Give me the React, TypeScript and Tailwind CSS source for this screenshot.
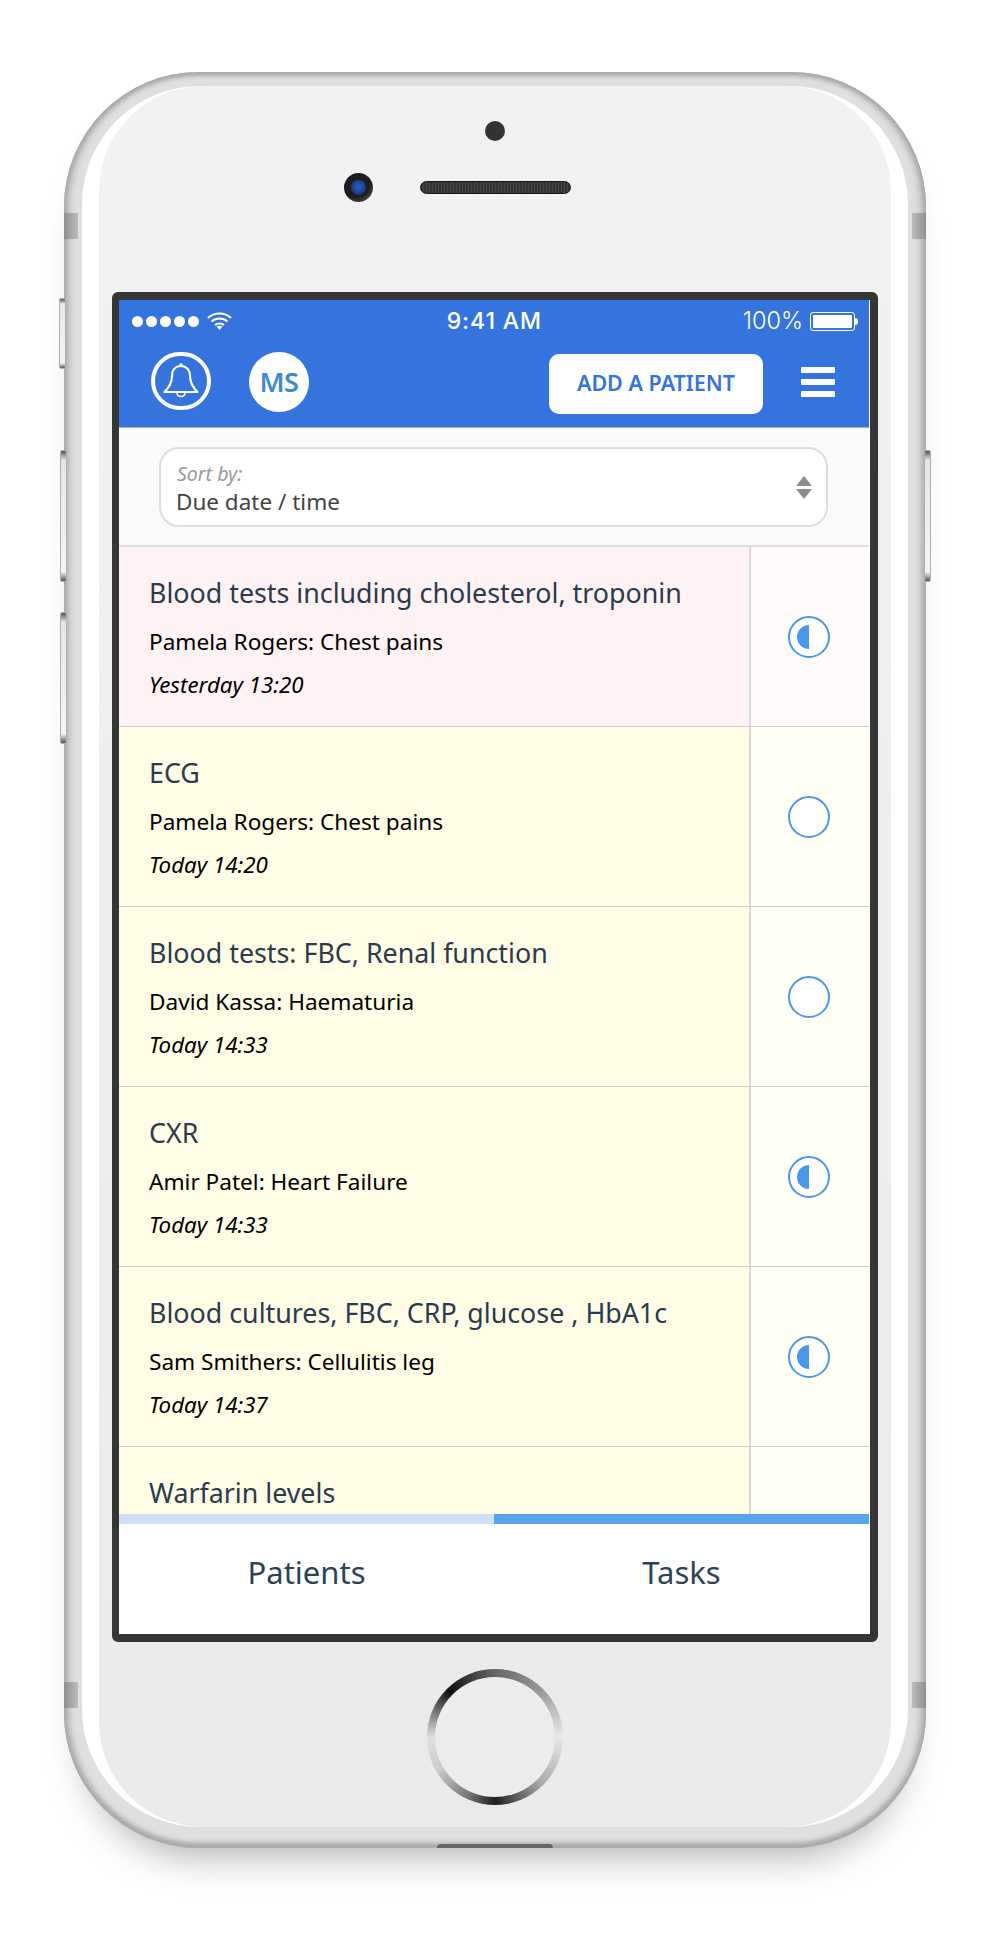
const tasks = [
  { title: "Blood tests including cholesterol, troponin", who: "Pamela Rogers: Chest pains", due: "Yesterday 13:20", state: "half", overdue: true },
  { title: "ECG", who: "Pamela Rogers: Chest pains", due: "Today 14:20", state: "empty" },
  { title: "Blood tests: FBC, Renal function", who: "David Kassa: Haematuria", due: "Today 14:33", state: "empty" },
  { title: "CXR", who: "Amir Patel: Heart Failure", due: "Today 14:33", state: "half" },
  { title: "Blood cultures, FBC, CRP, glucose , HbA1c", who: "Sam Smithers: Cellulitis leg", due: "Today 14:37", state: "half" },
  { title: "Warfarin levels", who: "", due: "", state: "none" },
];

function Bell() {
  return (
    <div className="w-[60px] h-[58px] rounded-full border-[4px] border-white flex items-center justify-center">
      <svg width="36" height="38" viewBox="0 0 36 38" fill="none" stroke="#fff" strokeWidth="2.200" strokeLinejoin="round">
        <circle cx="18" cy="3" r="1.800" fill="#fff" stroke="none" />
        <path d="M18 4c-6 0-9 4.500-9 10 0 7-2.500 11-7.500 16h33c-5-5-7.500-9-7.500-16 0-5.500-3-10-9-10z" />
        <path d="M14 30.500c0 2.500 1.800 4 4 4s4-1.500 4-4" strokeWidth="1.500" />
      </svg>
    </div>
  );
}

function Wifi() {
  return (
    <svg width="25" height="18" viewBox="0 0 25 18" fill="none" stroke="#fff" strokeWidth="2.200">
      <path d="M1 6c6.500-6 16.500-6 23 0" />
      <path d="M4.500 9.500c4.500-4 11.500-4 16 0" />
      <path d="M8 13c2.500-2 6.500-2 9 0" />
      <path d="M12.500 18l-3-3.400c1.800-1 4.200-1 6 0z" fill="#fff" stroke="none" />
    </svg>
  );
}

function StatusBar() {
  return (
    <div className="relative h-[42px] flex items-center pl-[13px] pr-[11px] text-white font-['Inter',sans-serif]">
      <div className="flex gap-[3px]">
        {[0, 1, 2, 3, 4].map((n) => (
          <span key={n} className="w-[11px] h-[11px] rounded-full bg-white" />
        ))}
      </div>
      <div className="ml-[8px]">
        <Wifi />
      </div>
      <div className="flex-1 text-center text-[23px] font-medium pl-[14px] tracking-[0.9px]">9:41 AM</div>
      <span className="text-[23.500px] font-light">100%</span>
      <div className="ml-[7px] flex items-center">
        <div className="w-[45px] h-[19px] rounded-[3px] border border-white p-[2px]">
          <div className="w-full h-full bg-white rounded-[1px]" />
        </div>
        <div className="w-[3px] h-[7px] bg-white rounded-r-full" />
      </div>
    </div>
  );
}

function Header() {
  return (
    <div className="bg-[#3574dc] border-b border-[#a9b4c2]">
      <StatusBar />
      <div className="h-[85px] flex items-start pt-[10px] pl-[32px]">
        <Bell />
        <div className="ml-[38px] w-[60px] h-[60px] rounded-full bg-white flex items-center justify-center text-[#3d8ad2] text-[27px] font-semibold tracking-[-0.5px]">
          MS
        </div>
        <button className="ml-auto mt-[2px] w-[214px] h-[60px] pb-[2px] rounded-[10px] bg-white text-[#3574dc] text-[21.500px] font-semibold">
          ADD A PATIENT
        </button>
        <div className="ml-[38px] mr-[34px] mt-[15px] w-[34px] flex flex-col gap-[6px]">
          <span className="h-[6px] rounded-[1px] bg-white" />
          <span className="h-[6px] rounded-[1px] bg-white" />
          <span className="h-[6px] rounded-[1px] bg-white" />
        </div>
      </div>
    </div>
  );
}

function SortBar() {
  return (
    <div className="h-[119px] bg-[#f9fafc] border-b-2 border-[#dddddd] pt-[19px] pl-[40px] pr-[41px]">
      <div className="h-[80px] rounded-[20px] border-2 border-[#dddddd] bg-white flex items-center pl-[15px] pr-[14px]">
        <div className="flex-1 pt-[5px]">
          <div className="text-[19.500px] leading-[25px] italic text-[#999999] pl-[1px]">Sort by:</div>
          <div className="text-[22.500px] leading-[32px] text-[#444444]">Due date / time</div>
        </div>
        <svg width="16" height="23" viewBox="0 0 16 23" fill="#8c8c8c">
          <path d="M8 0l8 10H0z" />
          <path d="M0 13h16l-8 10z" />
        </svg>
      </div>
    </div>
  );
}

function Progress({ state }: { state: string }) {
  if (state === "none") return null;
  return (
    <svg width="42" height="42" viewBox="0 0 42 42">
      <circle cx="21" cy="21" r="20" fill="#fff" stroke="#4a98e8" strokeWidth="2" />
      {state === "half" && <path d="M21 9a12 12 0 0 0 0 24z" fill="#4a98e8" />}
    </svg>
  );
}

function TaskRow({ task }: { task: (typeof tasks)[number] }) {
  return (
    <div className={`h-[180px] shrink-0 flex border-b border-[#cccccc] ${task.overdue ? "bg-[#fff2f4]" : "bg-[#fffde6]"}`}>
      <div className="flex-1 pl-[30px] pt-[28px]">
        <div className="text-[26.800px] leading-[36px] text-[#2a3b4d]">{task.title}</div>
        <div className="mt-[16px] text-[22.600px] leading-[30px] text-black">{task.who}</div>
        <div className="mt-[14px] text-[22.300px] leading-[28px] italic text-black">{task.due}</div>
      </div>
      <div className={`w-[120px] border-l-2 border-[#d9d9d9] flex items-center justify-center pr-[2px] ${task.overdue ? "bg-[#fffafa]" : "bg-[#fffff5]"}`}>
        <Progress state={task.state} />
      </div>
    </div>
  );
}

function Screen() {
  return (
    <div className="mt-[90px] w-[766px] h-[1350px] border-y-[8px] border-l-[7px] border-r-[8px] border-[#363636] rounded-[6px] bg-white pr-px flex flex-col overflow-hidden">
      <Header />
      <SortBar />
      <div className="flex-1 min-h-0 overflow-hidden flex flex-col">
        {tasks.map((task, i) => (
          <TaskRow key={i} task={task} />
        ))}
      </div>
      <div className="h-[10px] grid grid-cols-2 shrink-0">
        <div className="bg-[#cfe0f6]" />
        <div className="bg-[#58a4e9]" />
      </div>
      <div className="h-[110px] shrink-0 grid grid-cols-2 text-[31px] text-[#2c4356] text-center pt-[25px]">
        <div>Patients</div>
        <div>Tasks</div>
      </div>
    </div>
  );
}

function SideButton({ className }: { className: string }) {
  return (
    <div className={`absolute w-[7px] rounded-[2px] border border-[#b0b0b0] bg-[linear-gradient(to_bottom,#555555,#e6e6e6_7%,#f4f4f4_93%,#555555)] ${className}`} />
  );
}

export default function App() {
  return (
    <div className="w-[990px] h-[1934px] bg-white pt-[72px] pl-[64px] font-['Noto_Sans',sans-serif]">
      <div className="relative w-[862px] h-[1776px] rounded-[135px] bg-[#dedfe0] pt-[14px] pb-[21px] px-[18px] shadow-[inset_0_3px_4px_#a8a8a8,inset_0_-5px_5px_#aaaaaa,inset_5px_0_7px_#b0b0b0,inset_-5px_0_7px_#b0b0b0,0_30px_40px_-24px_rgba(0,0,0,0.35)]">
        <SideButton className="left-[-5px] top-[226px] h-[71px]" />
        <SideButton className="left-[-4px] top-[378px] h-[132px]" />
        <SideButton className="left-[-4px] top-[540px] h-[132px]" />
        <SideButton className="right-[-5px] top-[378px] h-[132px]" />

        {/* antenna bands */}
        <div className="absolute left-0 top-[141px] h-[26px] w-[14px] bg-gradient-to-r from-[#8e8f91] to-[#bcbdbf]" />
        <div className="absolute right-0 top-[141px] h-[26px] w-[14px] bg-gradient-to-l from-[#8e8f91] to-[#bcbdbf]" />
        <div className="absolute left-0 top-[1610px] h-[26px] w-[14px] bg-gradient-to-r from-[#8e8f91] to-[#bcbdbf]" />
        <div className="absolute right-0 top-[1610px] h-[26px] w-[14px] bg-gradient-to-l from-[#8e8f91] to-[#bcbdbf]" />
        {/* charging port */}
        <div className="absolute left-[373px] bottom-0 h-[4px] w-[116px] rounded-t-[4px] bg-[#666666]" />

        <div className="h-full rounded-[118px] bg-white px-[17px]">
          <div className="h-full rounded-[105px] bg-gradient-to-b from-[#f1f2f4] to-[#e9eaec] flex flex-col items-center pt-[35px]">
            <div className="w-[20px] h-[20px] rounded-full bg-[#333333]" />
            <div className="mt-[32px] w-full flex items-center pl-[245px] gap-[47px]">
              <div className="w-[29px] h-[29px] rounded-full bg-[radial-gradient(circle_at_40%_35%,#1d1d1f_55%,#6a6a6c)] flex items-center justify-center">
                <div className="w-[15px] h-[15px] rounded-full bg-[radial-gradient(circle_at_50%_45%,#2f5fc0,#0b2a6b)]" />
              </div>
              <div className="w-[151px] h-[13px] rounded-full border border-[#161616] bg-[repeating-linear-gradient(90deg,#333333_0,#333333_2px,#474747_2px,#474747_3px)]" />
            </div>
            <Screen />
            <div className="mt-[27px] w-[136px] h-[136px] rounded-full p-[8px] bg-[conic-gradient(#666666_0deg,#999999_45deg,#e8e8e8_90deg,#aaaaaa_135deg,#1f1f1f_180deg,#777777_205deg,#cccccc_240deg,#e0e0e0_270deg,#111111_315deg,#666666_360deg)]">
              <div className="w-full h-full rounded-full bg-[#ebecee]" />
            </div>
          </div>
        </div>
      </div>
    </div>
  );
}
